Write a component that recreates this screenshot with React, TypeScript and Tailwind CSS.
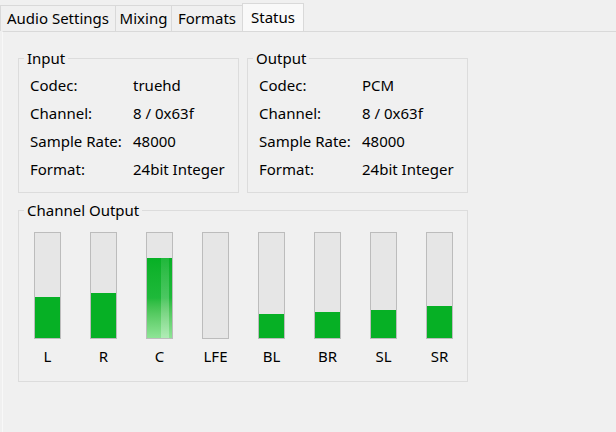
import React from 'react';

const tabs = [
  { label: 'Audio Settings', w: 'w-[116px]' },
  { label: 'Mixing', w: 'w-[57px]' },
  { label: 'Formats', w: 'w-[72px]' },
];

const inputRows = [
  ['Codec:', 'truehd'],
  ['Channel:', '8 / 0x63f'],
  ['Sample Rate:', '48000'],
  ['Format:', '24bit Integer'],
];

const outputRows = [
  ['Codec:', 'PCM'],
  ['Channel:', '8 / 0x63f'],
  ['Sample Rate:', '48000'],
  ['Format:', '24bit Integer'],
];

// fill height in px, out of 105 inner
const channels = [
  { name: 'L', level: 41 },
  { name: 'R', level: 45 },
  { name: 'C', level: 80, glow: true },
  { name: 'LFE', level: 0 },
  { name: 'BL', level: 24 },
  { name: 'BR', level: 26 },
  { name: 'SL', level: 28 },
  { name: 'SR', level: 32 },
];

const InfoGroup = ({ title, rows }: { title: string; rows: string[][] }) => (
  <fieldset className="w-[221px] border border-[#dcdcdc]">
    <legend className="ml-[5px] px-[3px] leading-[20px]">{title}</legend>
    <div className="pt-[3px] pb-[9px] pl-[11px]">
      {rows.map(([label, value]) => (
        <div key={label} className="flex h-[28px] items-center">
          <span className="w-[103px]">{label}</span>
          <span>{value}</span>
        </div>
      ))}
    </div>
  </fieldset>
);

const Meter = ({ name, level, glow }: { name: string; level: number; glow?: boolean }) => (
  <div className="flex w-[27px] flex-col items-center">
    <div className="flex h-[107px] w-[27px] flex-col justify-end border border-[#bcbcbc] bg-[#e6e6e6]">
      {level > 0 && (
        <div
          className={
            glow
              ? 'relative w-full bg-gradient-to-b from-[#06b025] via-[#1eb93a] to-[#8ee496]'
              : 'w-full bg-[#06b025]'
          }
          style={{ height: level }}
        >
          {glow && (
            <div className="absolute inset-y-0 left-[14px] w-[8px] bg-gradient-to-b from-white/10 to-white/30" />
          )}
        </div>
      )}
    </div>
    <div className="mt-[7px] leading-[20px]">{name}</div>
  </div>
);

export default function App() {
  return (
    <div
      className="flex h-[432px] w-[616px] flex-col overflow-hidden bg-[#f0f0f0] text-[15px] text-black"
      style={{ fontFamily: '"Noto Sans", "Open Sans", sans-serif' }}
    >
      {/* Tab strip */}
      <div className="flex h-[31px] items-end">
        {tabs.map((t) => (
          <div
            key={t.label}
            className={`-mr-px flex h-[26px] items-center justify-center border border-b-0 border-[#d9d9d9] bg-[#f0f0f0] ${t.w}`}
          >
            {t.label}
          </div>
        ))}
        <div className="flex h-[28px] w-[62px] items-center justify-center border border-b-0 border-[#d9d9d9] bg-[#f9f9f9]">
          Status
        </div>
      </div>

      {/* Tab page */}
      <div className="ml-[2px] flex-1 border-t border-l border-t-[#d9d9d9] border-l-[#f8f8f8] pt-[16px] pl-[15px]">
        <div className="flex gap-[8px]">
          <InfoGroup title="Input" rows={inputRows} />
          <InfoGroup title="Output" rows={outputRows} />
        </div>

        <fieldset className="mt-[7px] w-[450px] border border-[#dcdcdc]">
          <legend className="ml-[5px] px-[3px] leading-[20px]">Channel Output</legend>
          <div className="flex gap-[29px] pt-[12px] pb-[15px] pl-[15px]">
            {channels.map((c) => (
              <Meter key={c.name} {...c} />
            ))}
          </div>
        </fieldset>
      </div>
    </div>
  );
}
